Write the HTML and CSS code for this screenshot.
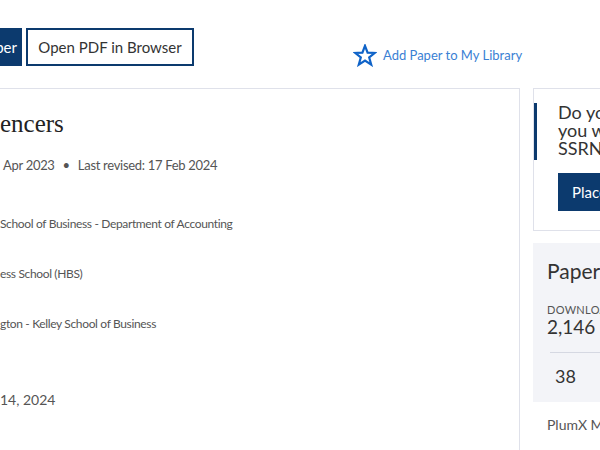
FILE: index.html
```html
<!DOCTYPE html>
<html lang="en">

<head>
    <meta charset="utf-8" />
    <title>SSRN Paper</title>
    <link rel="stylesheet" href="styles.css">
</head>

<body>
    <div class="toolbar">
        <button type="button" class="btn btn-dark">Download This Paper</button>
        <button type="button" class="btn btn-outline">Open PDF in Browser</button>
        <a class="library" href="#">
            <svg class="star" width="24" height="23" viewBox="0 0 24 23">
                <path d="M12 1.8 L14.6 8.6 L21.9 8.9 L16.2 13.5 L18.2 20.6 L12 16.5 L5.8 20.6 L7.8 13.5 L2.1 8.9 L9.4 8.6 Z"
                    fill="none" stroke="#0f63c8" stroke-width="2.2" stroke-linejoin="miter" />
            </svg>
            Add Paper to My Library
        </a>
    </div>

    <div class="page">
        <div class="main">
            <h1 class="title">encers</h1>
            <div class="dates">
                <span>Apr 2023</span>
                <span class="dot">&bull;</span>
                <span>Last revised: 17 Feb 2024</span>
            </div>

            <div class="authors">
                <p class="affil">School of Business - Department of Accounting</p>
                <p class="affil">ess School (HBS)</p>
                <p class="affil">gton - Kelley School of Business</p>
            </div>

            <div class="date-written">14, 2024</div>
        </div>

        <div class="side">
            <div class="jobs">
                <div class="jobs-text">Do you have a job opening that<br>you would like to promote on<br>SSRN?</div>
                <button type="button" class="btn btn-job">Place Job Opening</button>
            </div>

            <div class="stats">
                <h2>Paper Statistics</h2>
                <div class="stat-label">DOWNLOADS</div>
                <div class="stat-value">2,146</div>
                <div class="stat-row">38</div>
            </div>

            <div class="plumx">PlumX Metrics</div>
        </div>
    </div>
</body>

</html>
```

FILE: styles.css
```css
* {
    box-sizing: border-box;
}

body {
    margin: 0;
    background: #fff;
    font-family: Lato, "Open Sans", sans-serif;
    color: #555;
    overflow: hidden;
}

.toolbar {
    display: flex;
    align-items: center;
    height: 88px;
    padding-top: 6px;
}

.btn {
    font-family: Lato, "Open Sans", sans-serif;
    cursor: pointer;
    border: 2px solid #0c3a6e;
    border-radius: 0;
    height: 38px;
    font-size: 15px;
}

.btn-dark {
    width: 180px;
    margin-left: -158px;
    padding: 0 3px 0 0;
    text-align: right;
    background: #0c3a6e;
    color: #fff;
}

.btn-outline {
    margin-left: 4px;
    width: 168px;
    background: #fff;
    color: #333;
}

.library {
    display: flex;
    align-items: center;
    gap: 6px;
    margin-left: 159px;
    margin-top: 16px;
    color: #3a7fd4;
    font-size: 13px;
    text-decoration: none;
}

.page {
    display: flex;
    gap: 13px;
}

.main {
    width: 520px;
    flex-shrink: 0;
    height: 400px;
    border-top: 1px solid #dfe1ea;
    border-right: 1px solid #dfe1ea;
    padding-top: 20px;
}

.title {
    margin: 0;
    font-family: "Liberation Serif", "DejaVu Serif", serif;
    font-weight: normal;
    font-size: 25px;
    line-height: 30px;
    color: #222;
}

.dates {
    margin-top: 16px;
    padding-left: 3px;
    font-size: 13px;
    letter-spacing: -0.3px;
    line-height: 20px;
    display: flex;
    gap: 8px;
}

.authors {
    margin-top: 41px;
}

.affil {
    margin: 0 0 34px 0;
    font-size: 12px;
    letter-spacing: -0.35px;
    line-height: 16px;
}

.date-written {
    margin-top: 58px;
    font-size: 14px;
    line-height: 20px;
}

.side {
    width: 100px;
    flex-shrink: 0;
    white-space: nowrap;
}

.jobs {
    height: 143px;
    border: 1px solid #dfe1ea;
    border-right: none;
    padding: 14px 0 0 0;
}

.jobs-text {
    border-left: 3px solid #0c3a6e;
    padding-left: 21px;
    width: 300px;
    font-size: 18px;
    line-height: 18px;
    color: #333;
    height: 57px;
}

.btn-job {
    margin: 13px 0 0 24px;
    background: #0c3a6e;
    color: #fff;
    padding: 0 14px;
    text-align: left;
    border: none;
    width: 180px;
}

.stats {
    margin-top: 12px;
    background: #f3f4f8;
    height: 159px;
    padding: 14px 0 0 14px;
}

.stats h2 {
    margin: 0;
    font-weight: normal;
    font-size: 21px;
    line-height: 28px;
    color: #333;
}

.stat-label {
    margin-top: 18px;
    font-size: 11px;
    letter-spacing: 0.3px;
    color: #555;
}

.stat-value {
    font-size: 19px;
    line-height: 22px;
    color: #333;
}

.stat-row {
    margin: 14px 0 0 3px;
    border-top: 1px solid #d5d8e2;
    padding: 12px 0 0 5px;
    font-size: 18px;
    color: #333;
}

.plumx {
    margin: 14px 0 0 14px;
    font-size: 14px;
    color: #555;
}
```
